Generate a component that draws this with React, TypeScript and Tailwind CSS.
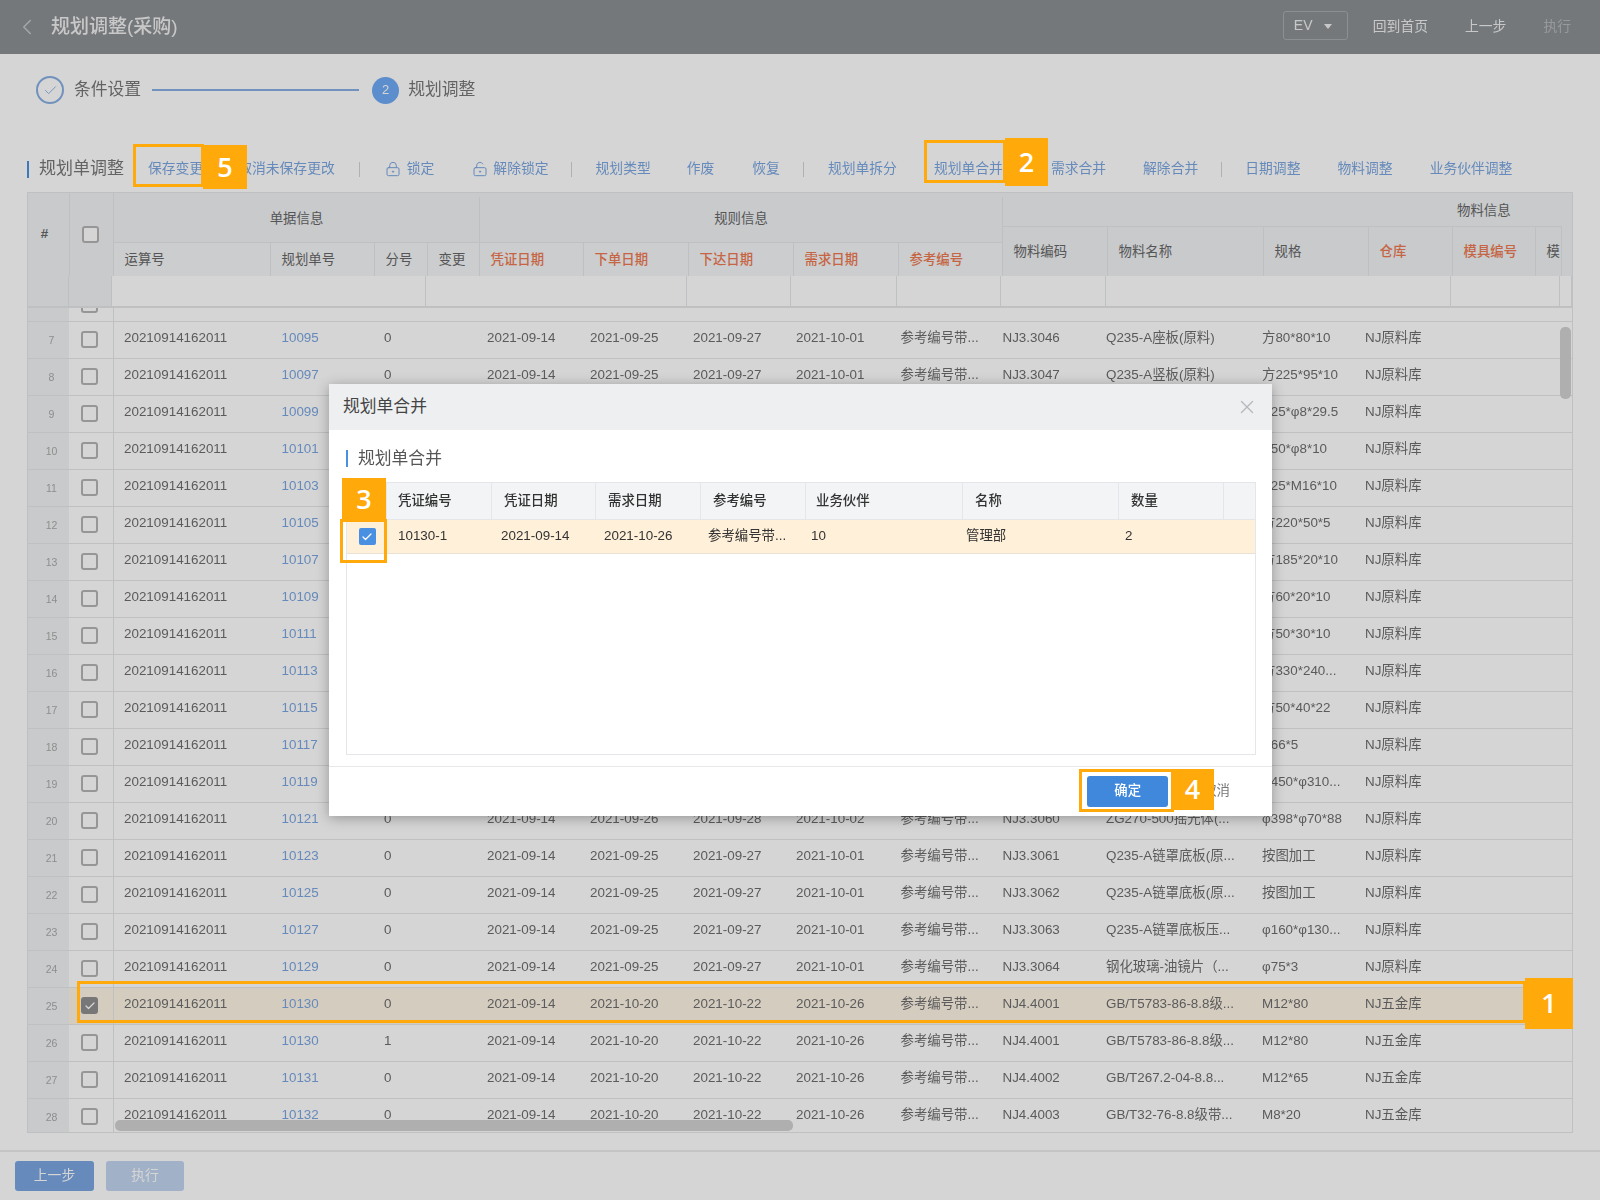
// App.tsx
import React from "react";
import { Check, ChevronLeft, LockKeyhole, LockKeyholeOpen, X } from "lucide-react";

interface PlanRow {
  no: number;
  plan: string;
  seq?: string;
  dates?: [string, string, string, string];
  refNo?: string;
  code?: string;
  name?: string;
  spec: string;
  store: string;
  checked?: boolean;
}

const d1: [string, string, string, string] = ["2021-09-14", "2021-09-25", "2021-09-27", "2021-10-01"];
const d2: [string, string, string, string] = ["2021-09-14", "2021-10-20", "2021-10-22", "2021-10-26"];
const refText = "参考编号带...";

const rows: PlanRow[] = [
  { no: 7, plan: "10095", seq: "0", dates: d1, refNo: refText, code: "NJ3.3046", name: "Q235-A座板(原料)", spec: "方80*80*10", store: "NJ原料库" },
  { no: 8, plan: "10097", seq: "0", dates: d1, refNo: refText, code: "NJ3.3047", name: "Q235-A竖板(原料)", spec: "方225*95*10", store: "NJ原料库" },
  { no: 9, plan: "10099", spec: "φ25*φ8*29.5", store: "NJ原料库" },
  { no: 10, plan: "10101", spec: "φ50*φ8*10", store: "NJ原料库" },
  { no: 11, plan: "10103", spec: "φ25*M16*10", store: "NJ原料库" },
  { no: 12, plan: "10105", spec: "方220*50*5", store: "NJ原料库" },
  { no: 13, plan: "10107", spec: "方185*20*10", store: "NJ原料库" },
  { no: 14, plan: "10109", spec: "方60*20*10", store: "NJ原料库" },
  { no: 15, plan: "10111", spec: "方50*30*10", store: "NJ原料库" },
  { no: 16, plan: "10113", spec: "方330*240...", store: "NJ原料库" },
  { no: 17, plan: "10115", spec: "方50*40*22", store: "NJ原料库" },
  { no: 18, plan: "10117", spec: "φ66*5", store: "NJ原料库" },
  { no: 19, plan: "10119", spec: "φ450*φ310...", store: "NJ原料库" },
  { no: 20, plan: "10121", seq: "0", dates: ["2021-09-14", "2021-09-26", "2021-09-28", "2021-10-02"], refNo: refText, code: "NJ3.3060", name: "ZG270-500摇光体(...", spec: "φ398*φ70*88", store: "NJ原料库" },
  { no: 21, plan: "10123", seq: "0", dates: d1, refNo: refText, code: "NJ3.3061", name: "Q235-A链罩底板(原...", spec: "按图加工", store: "NJ原料库" },
  { no: 22, plan: "10125", seq: "0", dates: d1, refNo: refText, code: "NJ3.3062", name: "Q235-A链罩底板(原...", spec: "按图加工", store: "NJ原料库" },
  { no: 23, plan: "10127", seq: "0", dates: d1, refNo: refText, code: "NJ3.3063", name: "Q235-A链罩底板压...", spec: "φ160*φ130...", store: "NJ原料库" },
  { no: 24, plan: "10129", seq: "0", dates: d1, refNo: refText, code: "NJ3.3064", name: "钢化玻璃-油镜片（...", spec: "φ75*3", store: "NJ原料库" },
  { no: 25, plan: "10130", seq: "0", dates: d2, refNo: refText, code: "NJ4.4001", name: "GB/T5783-86-8.8级...", spec: "M12*80", store: "NJ五金库", checked: true },
  { no: 26, plan: "10130", seq: "1", dates: d2, refNo: refText, code: "NJ4.4001", name: "GB/T5783-86-8.8级...", spec: "M12*80", store: "NJ五金库" },
  { no: 27, plan: "10131", seq: "0", dates: d2, refNo: refText, code: "NJ4.4002", name: "GB/T267.2-04-8.8...", spec: "M12*65", store: "NJ五金库" },
  { no: 28, plan: "10132", seq: "0", dates: d2, refNo: refText, code: "NJ4.4003", name: "GB/T32-76-8.8级带...", spec: "M8*20", store: "NJ五金库" },
];

const Box: React.FC<{ checked?: boolean }> = ({ checked }) =>
  checked ? (
    <span className="flex h-[17px] w-[17px] items-center justify-center rounded-[3px] bg-[#8f8f8f] text-white">
      <Check size={12} strokeWidth={2.5} />
    </span>
  ) : (
    <span className="block h-[17px] w-[17px] rounded-[3px] border-2 border-[#b4b4b4] bg-white" />
  );

const Sep: React.FC<{ className: string }> = ({ className }) => (
  <span className={`h-[15px] w-px bg-[#d4d4d4] ${className}`} />
);

const Link: React.FC<{ className: string; children: React.ReactNode }> = ({ className, children }) => (
  <span className={`text-[#7ba6e0] ${className}`}>{children}</span>
);

const Toolbar: React.FC = () => (
  <div className="mt-[48px] flex h-[34px] items-center whitespace-nowrap pl-[27px] text-[13.8px]">
    <span className="h-[17px] w-[2px] bg-[#4a90e2]" />
    <span className="ml-[10px] text-[17px] text-[#777]">规划单调整</span>
    <Link className="ml-[24px]">保存变更</Link>
    <Link className="ml-[35px]">取消未保存更改</Link>
    <Sep className="ml-[24px]" />
    <LockKeyhole size={16} strokeWidth={1.5} className="ml-[25px] text-[#7ba6e0]" />
    <Link className="ml-[6px]">锁定</Link>
    <LockKeyholeOpen size={16} strokeWidth={1.5} className="ml-[38px] text-[#7ba6e0]" />
    <Link className="ml-[5px]">解除锁定</Link>
    <Sep className="ml-[22px]" />
    <Link className="ml-[24px]">规划类型</Link>
    <Link className="ml-[36px]">作废</Link>
    <Link className="ml-[38px]">恢复</Link>
    <Sep className="ml-[23px]" />
    <Link className="ml-[24px]">规划单拆分</Link>
    <Link className="ml-[37px]">规划单合并</Link>
    <Link className="ml-[48px]">需求合并</Link>
    <Link className="ml-[37px]">解除合并</Link>
    <Sep className="ml-[23px]" />
    <Link className="ml-[23px]">日期调整</Link>
    <Link className="ml-[37px]">物料调整</Link>
    <Link className="ml-[37px]">业务伙伴调整</Link>
  </div>
);

const HeadCell: React.FC<{ label: string; red?: boolean }> = ({ label, red }) => (
  <div className={`flex items-center border-r border-[#e4e6e9] pl-[10.5px] pt-[2px] ${red ? "font-medium text-[#ee7a52]" : "text-[#666]"}`}>
    {label}
  </div>
);

const TableHead: React.FC = () => (
  <>
    <div className="flex h-[83px] shrink-0 bg-[#f0f2f5] text-[13.4px] text-[#666]">
      <div className="flex w-[42px] items-center justify-center border-r border-[#e4e6e9] pr-2 font-bold">#</div>
      <div className="flex w-[44px] items-center justify-center border-r border-[#e4e6e9] pr-[2px]">
        <Box />
      </div>
      <div className="flex w-[889px] flex-col">
        <div className="flex h-[50px] border-b border-[#e4e6e9] pt-[4px]">
          <div className="flex w-[366px] items-center justify-center border-r border-[#e4e6e9]">单据信息</div>
          <div className="flex flex-1 items-center justify-center border-r border-[#e4e6e9]">规则信息</div>
        </div>
        <div className="grid h-[33px] grid-cols-[157px_104px_53px_52px_104px_105px_105px_105px_104px] bg-[#f5f6f8]">
          <HeadCell label="运算号" />
          <HeadCell label="规划单号" />
          <HeadCell label="分号" />
          <HeadCell label="变更" />
          <HeadCell label="凭证日期" red />
          <HeadCell label="下单日期" red />
          <HeadCell label="下达日期" red />
          <HeadCell label="需求日期" red />
          <HeadCell label="参考编号" red />
        </div>
      </div>
      <div className="flex w-[559px] flex-col">
        <div className="flex h-[34px] items-center border-b border-[#e4e6e9] pl-[454px] pt-[4px]">物料信息</div>
        <div className="grid flex-1 grid-cols-[105px_156px_105px_84px_83px_26px]">
          <HeadCell label="物料编码" />
          <HeadCell label="物料名称" />
          <HeadCell label="规格" />
          <HeadCell label="仓库" red />
          <HeadCell label="模具编号" red />
          <HeadCell label="模" />
        </div>
      </div>
    </div>
    <div className="flex h-[32px] shrink-0 border-b-2 border-[#e4e6e9]">
      <div className="w-[42px] border-r border-[#e4e6e9] bg-[#f0f2f5]" />
      <div className="w-[44px] border-r border-[#e4e6e9] bg-[#f0f2f5]" />
      <div className="grid flex-1 grid-cols-[314px_261px_104px_106px_104px_105px_345px_109px_12px]">
        {Array.from({ length: 9 }, (_, i) => (
          <div key={i} className="border-r border-[#e4e6e9]" />
        ))}
      </div>
    </div>
    <div className="flex h-[14px] shrink-0 overflow-hidden border-b border-[#e4e6e9]">
      <div className="w-[41px] bg-[#f0f2f5]" />
      <div className="ml-px flex w-[44px] justify-center border-r border-[#e4e6e9] pr-1">
        <div className="-mt-[12px]">
          <Box />
        </div>
      </div>
    </div>
  </>
);

const TableRow: React.FC<{ row: PlanRow }> = ({ row }) => (
  <div className={`flex h-[37px] shrink-0 border-b border-[#e4e6e9] ${row.checked ? "bg-[#fff5e6]" : ""}`}>
    <div className="flex w-[41px] items-center justify-center bg-[#f0f2f5] pl-[6px] pt-[2px] text-[10.5px] text-[#aaa]">{row.no}</div>
    <div className="ml-px flex w-[44px] items-center justify-center border-r border-[#e4e6e9] pb-[1px] pr-1">
      <Box checked={row.checked} />
    </div>
    <div className="grid flex-1 grid-cols-[157.5px_102.5px_50px_53px_103px_103px_103px_104.5px_102px_103.5px_156px_103px_87px] items-center whitespace-nowrap pb-[4px] pl-[10px] text-[13.4px] text-[#6e6e6e]">
      <span>20210914162011</span>
      <span className="text-[#7ba6e0]">{row.plan}</span>
      <span>{row.seq}</span>
      <span />
      <span>{row.dates?.[0]}</span>
      <span>{row.dates?.[1]}</span>
      <span>{row.dates?.[2]}</span>
      <span>{row.dates?.[3]}</span>
      <span>{row.refNo}</span>
      <span>{row.code}</span>
      <span>{row.name}</span>
      <span>{row.spec}</span>
      <span>{row.store}</span>
    </div>
  </div>
);

const Dialog: React.FC = () => (
  <div className="absolute left-[329px] top-[384px] flex h-[432px] w-[943px] flex-col bg-white shadow-[0_2px_12px_rgba(0,0,0,0.3)] blur-[0.4px]">
    <div className="flex h-[46px] items-center justify-between bg-[#eeeff1] pl-[14px] pr-[14px] text-[16.8px] text-[#444]">
      <span>规划单合并</span>
      <X size={22} strokeWidth={1.5} className="text-[#b4b8bd]" />
    </div>
    <div className="mx-[17px] mt-[20px] flex h-[17px] items-center">
      <span className="h-[17px] w-[2px] bg-[#4a90e2]" />
      <span className="ml-[10px] text-[16.8px] text-[#555]">规划单合并</span>
    </div>
    <div className="mx-[17px] mt-[15px] h-[273px] w-[910px] border border-[#e4e6e9] text-[13.4px] text-[#333]">
      <div className="grid h-[37px] grid-cols-[40px_105px_104px_105px_105px_157px_156px_105px_1fr] border-b border-[#e4e6e9] bg-[#f3f4f6] font-medium">
        <span className="border-r border-[#e4e6e9]" />
        {["凭证编号", "凭证日期", "需求日期", "参考编号", "业务伙伴", "名称", "数量"].map((h, i) => (
          <span key={h} className={`flex items-center border-r border-[#e4e6e9] ${i === 0 ? "pl-[11px]" : i === 4 ? "pl-[10px]" : "pl-3"}`}>
            {h}
          </span>
        ))}
        <span />
      </div>
      <div className="grid h-[34px] grid-cols-[40px_105px_104px_105px_105px_157px_156px_105px_1fr] items-center border-b border-[#e9e2d4] bg-[#fff0d9]">
        <span className="flex justify-center">
          <span className="flex h-[17px] w-[17px] items-center justify-center rounded-[2px] bg-[#4a90e2] text-white">
            <Check size={12} strokeWidth={2.5} />
          </span>
        </span>
        <span className="pl-[11px]">10130-1</span>
        <span className="pl-[9px]">2021-09-14</span>
        <span className="pl-[8px]">2021-10-26</span>
        <span className="pl-[7px]">{refText}</span>
        <span className="pl-[5px]">10</span>
        <span className="pl-[3px]">管理部</span>
        <span className="pl-[6px]">2</span>
      </div>
    </div>
    <div className="mt-[11px] flex flex-1 items-center justify-end gap-[35px] border-t border-[#e8e8e8] pr-[42px]">
      <span className="flex h-[31px] w-[81px] items-center justify-center rounded-[3px] bg-[#4088dc] text-[13.4px] font-medium text-white">
        确定
      </span>
      <span className="text-[13.4px] text-[#777]">取消</span>
    </div>
  </div>
);

const Callouts: React.FC = () => {
  const label =
    "absolute flex items-center justify-center bg-[#ffa90a] font-['Open_Sans',sans-serif] text-[27px] font-semibold text-white";
  const frame = "absolute border-[3px] border-[#ffa90a]";
  return (
    <>
      <div className={`${frame} left-[77px] top-[981px] h-[42px] w-[1449px]`} />
      <div className={`${label} left-[1525px] top-[978px] h-[51px] w-[48px]`}>1</div>
      <div className={`${frame} left-[924px] top-[140px] h-[43px] w-[82px]`} />
      <div className={`${label} left-[1005px] top-[138px] h-[48px] w-[43px]`}>2</div>
      <div className={`${frame} left-[340px] top-[519px] h-[44px] w-[47px]`} />
      <div className={`${label} left-[342px] top-[478px] h-[42px] w-[44px]`}>3</div>
      <div className={`${frame} left-[1079px] top-[769px] h-[43px] w-[95px]`} />
      <div className={`${label} left-[1171px] top-[769px] h-[41px] w-[43px]`}>4</div>
      <div className={`${frame} left-[133px] top-[144px] h-[43px] w-[71px]`} />
      <div className={`${label} left-[203px] top-[145px] h-[44px] w-[44px]`}>5</div>
    </>
  );
};

const App: React.FC = () => (
  <div className="relative h-[1200px] w-[1600px] overflow-hidden bg-white font-['Liberation_Sans','Noto_Sans_CJK_SC',sans-serif]">
    <div className="blur-[0.4px]">
      <div className="flex h-[54px] items-center whitespace-nowrap bg-[#8c9094] text-[#f0f0f0]">
        <ChevronLeft size={26} strokeWidth={1.5} className="ml-[14px] text-[#c4c6c8]" />
        <span className="ml-[11px] text-[19px] font-medium">规划调整(采购)</span>
        <div className="-mt-[4px] ml-auto flex h-[29px] w-[65px] items-center rounded-[3px] border border-[#a9acaf] pl-[10px] text-[14px]">
          EV
          <span className="ml-[11px] mt-[2px] border-x-[4px] border-t-[5px] border-x-transparent border-t-[#f0f0f0]" />
        </div>
        <span className="ml-[25px] text-[13.8px]">回到首页</span>
        <span className="ml-[37px] text-[13.8px]">上一步</span>
        <span className="ml-[37px] mr-[29px] text-[13.8px] text-[#b6b8ba]">执行</span>
      </div>

      <div className="ml-[36px] mt-[22px] flex h-[28px] items-center whitespace-nowrap text-[16.8px] text-[#777]">
        <span className="flex h-[28px] w-[28px] items-center justify-center rounded-full border-2 border-[#88afe4] text-[#88afe4]">
          <Check size={15} strokeWidth={1.5} />
        </span>
        <span className="ml-[10px]">条件设置</span>
        <span className="ml-[11px] h-[2px] w-[207px] bg-[#88afe4]" />
        <span className="ml-[13px] flex h-[27px] w-[27px] items-center justify-center rounded-full bg-[#6fa9f5] text-[13px] text-white">2</span>
        <span className="ml-[9px]">规划调整</span>
      </div>

      <Toolbar />

      <div className="relative ml-[27px] mt-[6px] flex h-[941px] w-[1546px] flex-col overflow-hidden border border-[#e4e6e9]">
        <TableHead />
        {rows.map((row) => (
          <TableRow key={row.no} row={row} />
        ))}
        <div className="absolute bottom-[1px] left-[87px] h-[11px] w-[678px] rounded-[5px] bg-[#d2d2d2]" />
        <div className="absolute right-px top-[134px] h-[72px] w-[11px] rounded-[5px] bg-[#d2d2d2]" />
      </div>

      <div className="mt-[17px] flex h-[50px] gap-[12px] border-t-2 border-[#ececec] pl-[15px] pt-[9px]">
        <span className="flex h-[30px] w-[79px] items-center justify-center rounded-[3px] bg-[#7ba6e0] text-[13.8px] text-white">上一步</span>
        <span className="flex h-[30px] w-[78px] items-center justify-center rounded-[3px] bg-[#c0d4f0] text-[13.8px] text-white">执行</span>
      </div>
    </div>

    <div className="absolute inset-0 bg-black/[0.165]" />
    <Dialog />
    <Callouts />
  </div>
);

export default App;
